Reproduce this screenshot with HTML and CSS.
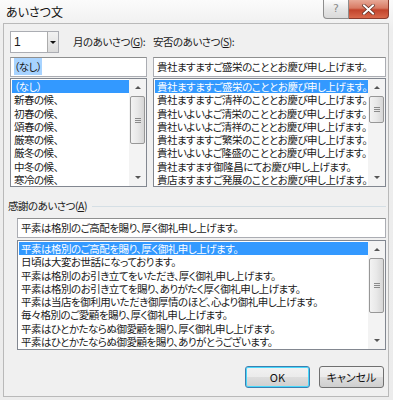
FILE: index.html
```html
<!DOCTYPE html>
<html lang="ja">
<head>
    <meta charset="UTF-8">
    <meta name="viewport" content="width=device-width, initial-scale=1.0">
    <title>あいさつ文</title>
    <link rel="stylesheet" href="styles.css">
</head>
<body>
    <div class="window">
        <div class="titlebar">
            <span class="title">あいさつ文</span>
            <div class="caption-buttons">
                <div class="help-btn">?</div>
                <div class="close-btn">
                    <svg width="13" height="11" viewBox="0 0 13 11">
                        <path d="M2 1.5 L11 9.5 M11 1.5 L2 9.5" stroke="#5a2a20" stroke-width="3.4" stroke-linecap="square"/>
                        <path d="M2 1.5 L11 9.5 M11 1.5 L2 9.5" stroke="#fff" stroke-width="2" stroke-linecap="square"/>
                    </svg>
                </div>
            </div>
        </div>

        <div class="client">
            <div class="top-area">
                <div class="col-left">
                    <div class="head-row">
                        <div class="combo">
                            <span class="combo-value">1</span>
                            <span class="combo-arrow"><i class="tri-down"></i></span>
                        </div>
                        <span class="label">月のあいさつ(<u>G</u>):</span>
                    </div>
                    <div class="textbox"><span class="sel-text">（なし）</span></div>
                    <div class="listbox list-left">
                        <ul class="items">
                            <li class="selected">（なし）</li>
                            <li>新春の候、</li>
                            <li>初春の候、</li>
                            <li>頌春の候、</li>
                            <li>厳寒の候、</li>
                            <li>厳冬の候、</li>
                            <li>中冬の候、</li>
                            <li>寒冷の候、</li>
                        </ul>
                        <div class="vscroll">
                            <div class="arrow"><i class="tri-up"></i></div>
                            <div class="track"><div class="thumb thumb-left"><i></i><i></i><i></i></div></div>
                            <div class="arrow"><i class="tri-down small"></i></div>
                        </div>
                    </div>
                </div>

                <div class="col-right">
                    <div class="head-row">
                        <span class="label">安否のあいさつ(<u>S</u>):</span>
                    </div>
                    <div class="textbox">貴社ますますご盛栄のこととお慶び申し上げます。</div>
                    <div class="listbox list-right">
                        <ul class="items">
                            <li class="selected">貴社ますますご盛栄のこととお慶び申し上げます。</li>
                            <li>貴社ますますご清祥のこととお慶び申し上げます。</li>
                            <li>貴社いよいよご清栄のこととお慶び申し上げます。</li>
                            <li>貴社いよいよご清祥のこととお慶び申し上げます。</li>
                            <li>貴社ますますご繁栄のこととお慶び申し上げます。</li>
                            <li>貴社いよいよご隆盛のこととお慶び申し上げます。</li>
                            <li>貴社ますます御隆昌にてお慶び申し上げます。</li>
                            <li>貴店ますますご発展のこととお慶び申し上げます。</li>
                        </ul>
                        <div class="vscroll">
                            <div class="arrow"><i class="tri-up"></i></div>
                            <div class="track"><div class="thumb thumb-right"><i></i><i></i><i></i></div></div>
                            <div class="arrow"><i class="tri-down small"></i></div>
                        </div>
                    </div>
                </div>
            </div>

            <div class="group">
                <div class="group-head">
                    <span class="label">感謝のあいさつ(<u>A</u>)</span>
                    <span class="group-line"></span>
                </div>
                <div class="group-body">
                    <div class="textbox">平素は格別のご高配を賜り、厚く御礼申し上げます。</div>
                    <div class="listbox list-bottom">
                        <ul class="items">
                            <li class="selected">平素は格別のご高配を賜り、厚く御礼申し上げます。</li>
                            <li>日頃は大変お世話になっております。</li>
                            <li>平素は格別のお引き立てをいただき、厚く御礼申し上げます。</li>
                            <li>平素は格別のお引き立てを賜り、ありがたく厚く御礼申し上げます。</li>
                            <li>平素は当店を御利用いただき御厚情のほど、心より御礼申し上げます。</li>
                            <li>毎々格別のご愛顧を賜り、厚く御礼申し上げます。</li>
                            <li>平素はひとかたならぬ御愛顧を賜り、厚く御礼申し上げます。</li>
                            <li>平素はひとかたならぬ御愛顧を賜り、ありがとうございます。</li>
                        </ul>
                        <div class="vscroll">
                            <div class="arrow"><i class="tri-up"></i></div>
                            <div class="track"><div class="thumb thumb-bottom"><i></i><i></i><i></i></div></div>
                            <div class="arrow"><i class="tri-down small"></i></div>
                        </div>
                    </div>
                </div>
            </div>

            <div class="button-row">
                <button class="btn btn-default">OK</button>
                <button class="btn">キャンセル</button>
            </div>
        </div>
    </div>
</body>
</html>
```

FILE: styles.css
```css
html, body {
    margin: 0;
    padding: 0;
}

body {
    font-family: "Noto Sans CJK JP", "Noto Sans", sans-serif;
    font-size: 10.5px;
    letter-spacing: -0.5px;
    color: #1a1a1a;
    background-color: #ffffff;
}

.window {
    width: 393px;
    height: 400px;
    box-sizing: border-box;
    display: flex;
    flex-direction: column;
    padding: 0 4px 3px 3px;
    background: linear-gradient(#fbfbfb, #eeeeee 30px, #ececec);
}

.titlebar {
    height: 23px;
    display: flex;
    align-items: flex-start;
}

.title {
    margin-top: 4px;
    margin-left: 3px;
    font-size: 12px;
    letter-spacing: 0;
    line-height: 16px;
    color: #111;
    font-feature-settings: "palt";
}

.caption-buttons {
    margin-left: auto;
    display: flex;
}

.help-btn {
    width: 24px;
    height: 18px;
    border: 1px solid #8d8d8d;
    border-top: none;
    border-radius: 0 0 0 4px;
    background: linear-gradient(#fdfdfd, #e6e6e6 50%, #d9d9d9);
    color: #8a8a8a;
    font-family: "DejaVu Sans", sans-serif;
    font-size: 11px;
    letter-spacing: 0;
    line-height: 17px;
    text-align: center;
}

.close-btn {
    width: 39px;
    height: 18px;
    border: 1px solid #8a3a2c;
    border-top: none;
    border-left: none;
    border-radius: 0 0 4px 0;
    background: linear-gradient(#e8a997, #d87a63 45%, #c2442c 55%, #d9694c);
    display: flex;
    align-items: center;
    justify-content: center;
}

.client {
    flex: 1;
    display: flex;
    flex-direction: column;
    background-color: #f0f0f0;
    border: 1px solid #b9b9b9;
    padding: 7px 2px 0 6px;
}

.top-area {
    display: flex;
    gap: 6px;
}

.col-left {
    width: 137px;
    flex-shrink: 0;
}

.col-right {
    flex: 1;
    min-width: 0;
}

.head-row {
    height: 22px;
    display: flex;
    align-items: center;
    margin-bottom: 4px;
}

.label {
    line-height: 14px;
    white-space: nowrap;
    font-feature-settings: "palt";
}

.combo {
    width: 49px;
    height: 22px;
    flex-shrink: 0;
    box-sizing: border-box;
    display: flex;
    border: 1px solid #abadb3;
    background: #fff;
    margin-right: 14px;
}

.combo-value {
    flex: 1;
    padding-left: 3px;
    line-height: 20px;
    font-family: "Liberation Sans", sans-serif;
    font-size: 12px;
    letter-spacing: 0;
}

.combo-arrow {
    width: 10px;
    border-left: 1px solid #acacac;
    background: linear-gradient(#f2f2f2, #dcdcdc);
    display: flex;
    align-items: center;
    justify-content: center;
}

.tri-down {
    width: 0;
    height: 0;
    border-left: 3px solid transparent;
    border-right: 3px solid transparent;
    border-top: 3px solid #111;
}

.tri-down.small {
    border-top-color: #555;
}

.tri-up {
    width: 0;
    height: 0;
    border-left: 3px solid transparent;
    border-right: 3px solid transparent;
    border-bottom: 3px solid #555;
}

.textbox {
    height: 20px;
    box-sizing: border-box;
    border: 1px solid #abadb3;
    border-top-color: #8e8f8f;
    background: #fff;
    padding-left: 3px;
    line-height: 18px;
    white-space: nowrap;
    overflow: hidden;
    font-feature-settings: "palt";
}

.sel-text {
    background: #a8d3ff;
    padding: 1px 0;
}

.listbox {
    margin-top: 1px;
    display: flex;
    box-sizing: border-box;
    border: 1px solid #828790;
    background: #fff;
    overflow: hidden;
}

.list-left, .list-right {
    height: 109px;
}

.list-bottom {
    height: 110px;
    margin-top: 2px;
}

.items {
    flex: 1;
    list-style: none;
    margin: 0;
    padding: 1px 0 0 1px;
    min-width: 0;
}

.items li {
    height: 13.3px;
    line-height: 13px;
    padding-left: 2px;
    white-space: nowrap;
    font-feature-settings: "palt";
}

.items li.selected {
    background: #3399ff;
    color: #fff;
}

.vscroll {
    width: 17px;
    flex-shrink: 0;
    display: flex;
    flex-direction: column;
    background: #f3f3f3;
}

.arrow {
    height: 17px;
    display: flex;
    align-items: center;
    justify-content: center;
}

.track {
    flex: 1;
}

.thumb {
    margin: 0 1px;
    box-sizing: border-box;
    border: 1px solid #979797;
    border-radius: 2px;
    background: linear-gradient(90deg, #f3f3f3, #e8e8e8 50%, #d6d6d6);
    display: flex;
    flex-direction: column;
    align-items: center;
    justify-content: center;
    gap: 1px;
}

.thumb i {
    width: 6px;
    height: 1px;
    background: #8a8a8a;
}

.thumb-left {
    height: 48px;
}

.thumb-right {
    height: 27px;
}

.thumb-bottom {
    height: 55px;
}

.group {
    margin-top: 12px;
    margin-left: -2px;
}

.group-head {
    display: flex;
    align-items: center;
    height: 14px;
}

.group-line {
    flex: 1;
    height: 0;
    border-top: 1px solid #d5dfe5;
    margin-left: 5px;
}

.group-body {
    margin-top: 5px;
    margin-left: 9px;
}

.button-row {
    margin-top: 16px;
    display: flex;
    justify-content: flex-end;
    gap: 9px;
    padding-right: 2px;
}

.btn {
    width: 65px;
    height: 22px;
    box-sizing: border-box;
    border: 1px solid #707070;
    border-radius: 3px;
    background: linear-gradient(#f2f2f2, #ebebeb 50%, #dddddd 51%, #cfcfcf);
    font-family: "Noto Sans CJK JP", "Noto Sans", sans-serif;
    font-size: 11px;
    letter-spacing: 0;
    color: #111;
    padding: 0;
    font-feature-settings: "palt";
}

.btn-default {
    border-color: #3c7fb1;
    box-shadow: inset 0 0 0 1px #48d8fb;
}
```
